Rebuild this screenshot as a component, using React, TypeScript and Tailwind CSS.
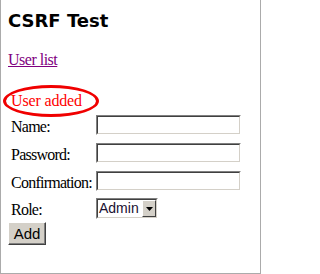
import React from "react";

const serif = { fontFamily: '"Liberation Serif", "Times New Roman", serif' };

function Inset({ className, children }: { className: string; children?: React.ReactNode }) {
  return (
    <div className={`border-t border-l border-t-[#808080] border-l-[#808080] border-b border-r border-b-white border-r-white ${className}`}>
      <div className="w-full h-full border-t border-l border-t-[#404040] border-l-[#404040] border-b border-r border-b-[#d4d0c8] border-r-[#d4d0c8] bg-white flex items-center">
        {children}
      </div>
    </div>
  );
}

function Row({ label, children }: { label: string; children: React.ReactNode }) {
  return (
    <div className="flex h-[28px]">
      <div className="w-[85px] pt-[4px] leading-[20px] text-[16px] tracking-[-0.75px] text-black whitespace-nowrap" style={serif}>
        {label}
      </div>
      <div className="pt-[2px]">{children}</div>
    </div>
  );
}

export default function App() {
  return (
    <div className="w-[261px] h-[274px] bg-white border-l border-r border-b border-[#ababab] relative overflow-hidden">
      <h1
        className="pl-[7px] pt-[10px] text-[18px] font-bold leading-[22px] text-black"
        style={{ fontFamily: '"DejaVu Sans", Verdana, sans-serif' }}
      >
        CSRF Test
      </h1>
      <div className="pl-[7px] mt-[19px] leading-[18px] text-[16px] tracking-[-0.5px]" style={serif}>
        <a href="#" className="text-[#800080] underline">User list</a>
      </div>
      <div className="pl-[10px] mt-[23px] leading-[18px] text-[16px] tracking-[-0.15px] text-[#ff0000]" style={serif}>
        <span className="relative inline-block">
          User added
          <span className="absolute left-[-8px] top-[-7px] w-[96px] h-[32px] rounded-[50%] border-[3px] border-[#f00000]" />
        </span>
      </div>
      <div className="pl-[10px] mt-[3px]">
        <Row label="Name:">
          <Inset className="w-[145px] h-[20px]" />
        </Row>
        <Row label="Password:">
          <Inset className="w-[145px] h-[20px]" />
        </Row>
        <Row label="Confirmation:">
          <Inset className="w-[145px] h-[20px]" />
        </Row>
        <div className="flex h-[24px]">
          <div className="w-[85px] pt-[3px] leading-[20px] text-[16px] tracking-[-0.75px] text-black" style={serif}>
            Role:
          </div>
          <div className="pt-[1px]">
            <Inset className="w-[62px] h-[21px]">
              <span
                className="pl-[1px] text-[14px] leading-[17px] text-[#1a1030] flex-1"
                style={{ fontFamily: '"Liberation Sans", Arial, sans-serif' }}
              >
                Admin
              </span>
              <div className="w-[14px] h-[17px] bg-[#d4d0c8] border-t border-l border-white border-b border-r border-b-[#404040] border-r-[#404040] flex items-center justify-center">
                <svg width="7" height="4" viewBox="0 0 7 4">
                  <path d="M0 0 H7 L3.5 4 Z" fill="#000" />
                </svg>
              </div>
            </Inset>
          </div>
        </div>
        <div className="ml-[-3px] mt-[1px]">
          <button
            className="w-[38px] h-[23px] bg-[#d4d0c8] border-t border-l border-t-white border-l-white border-b border-r border-b-[#404040] border-r-[#404040] shadow-[inset_-1px_-1px_0_#808080] text-[15px] leading-[18px] text-black flex items-center justify-center"
            style={{ fontFamily: '"Liberation Sans", Arial, sans-serif' }}
          >
            Add
          </button>
        </div>
      </div>
    </div>
  );
}
